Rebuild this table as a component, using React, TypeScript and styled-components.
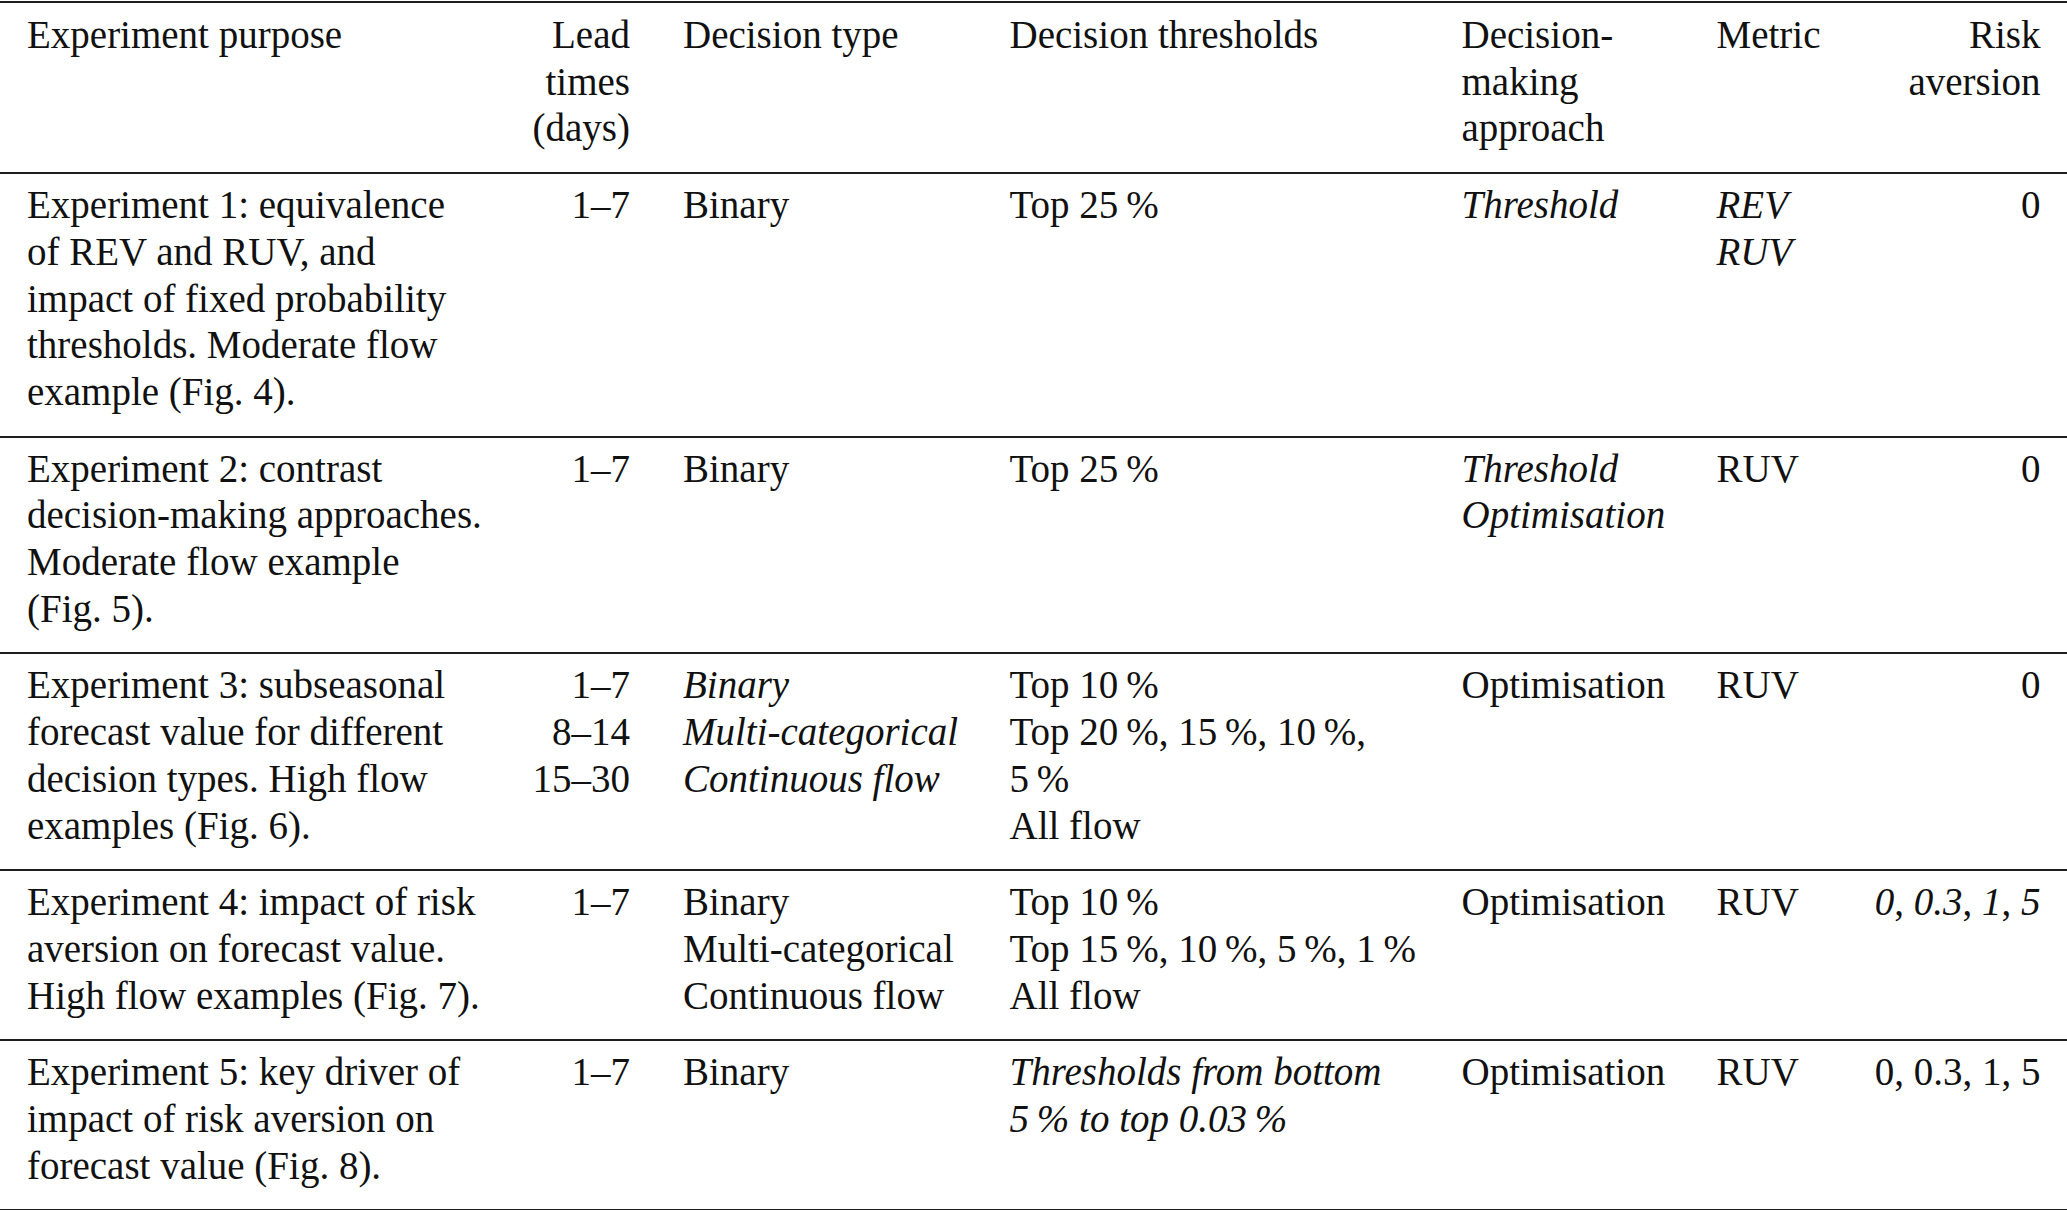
import React from 'react'
import styled, { createGlobalStyle } from 'styled-components';

type Line = React.ReactNode;

type Row = {
  purpose: Line[];
  lead: Line[];
  type: Line[];
  typeItalic?: boolean;
  thresholds: Line[];
  thresholdsItalic?: boolean;
  approach: Line[];
  approachItalic?: boolean;
  metric: Line[];
  metricItalic?: boolean;
  risk: Line[];
};

const pct = (n: string) => `${n}\u2009%`;

const RiskItalic = () => (
  <>
    <em>0</em>, <em>0.3</em>, <em>1</em>, <em>5</em>
  </>
);

const rows: Row[] = [
  {
    purpose: [
      'Experiment 1: equivalence',
      'of REV and RUV, and',
      'impact of fixed probability',
      'thresholds. Moderate flow',
      'example (Fig. 4).',
    ],
    lead: ['1–7'],
    type: ['Binary'],
    thresholds: [`Top ${pct('25')}`],
    approach: ['Threshold'],
    approachItalic: true,
    metric: ['REV', 'RUV'],
    metricItalic: true,
    risk: ['0'],
  },
  {
    purpose: [
      'Experiment 2: contrast',
      'decision-making approaches.',
      'Moderate flow example',
      '(Fig. 5).',
    ],
    lead: ['1–7'],
    type: ['Binary'],
    thresholds: [`Top ${pct('25')}`],
    approach: ['Threshold', 'Optimisation'],
    approachItalic: true,
    metric: ['RUV'],
    risk: ['0'],
  },
  {
    purpose: [
      'Experiment 3: subseasonal',
      'forecast value for different',
      'decision types. High flow',
      'examples (Fig. 6).',
    ],
    lead: ['1–7', '8–14', '15–30'],
    type: ['Binary', 'Multi-categorical', 'Continuous flow'],
    typeItalic: true,
    thresholds: [
      `Top ${pct('10')}`,
      `Top ${pct('20')}, ${pct('15')}, ${pct('10')},`,
      pct('5'),
      'All flow',
    ],
    approach: ['Optimisation'],
    metric: ['RUV'],
    risk: ['0'],
  },
  {
    purpose: [
      'Experiment 4: impact of risk',
      'aversion on forecast value.',
      'High flow examples (Fig. 7).',
    ],
    lead: ['1–7'],
    type: ['Binary', 'Multi-categorical', 'Continuous flow'],
    thresholds: [
      `Top ${pct('10')}`,
      `Top ${pct('15')}, ${pct('10')}, ${pct('5')}, ${pct('1')}`,
      'All flow',
    ],
    approach: ['Optimisation'],
    metric: ['RUV'],
    risk: [<RiskItalic key="r" />],
  },
  {
    purpose: [
      'Experiment 5: key driver of',
      'impact of risk aversion on',
      'forecast value (Fig. 8).',
    ],
    lead: ['1–7'],
    type: ['Binary'],
    thresholds: ['Thresholds from bottom', `${pct('5')} to top ${pct('0.03')}`],
    thresholdsItalic: true,
    approach: ['Optimisation'],
    metric: ['RUV'],
    risk: ['0, 0.3, 1, 5'],
  },
];

const Lines = ({ items }: { items: Line[] }) => (
  <>
    {items.map((l, i) => (
      <TextLine key={i}>{l}</TextLine>
    ))}
  </>
);

export default function App() {
  return (
    <>
      <GlobalStyle />
      <Page>
        <Table>
          <colgroup>
            <col style={{ width: 506 }} />
            <col style={{ width: 150.5 }} />
            <col style={{ width: 326.5 }} />
            <col style={{ width: 452 }} />
            <col style={{ width: 255 }} />
            <col style={{ width: 155 }} />
            <col style={{ width: 222 }} />
          </colgroup>
          <thead>
            <tr>
              <HeadCell><Lines items={['Experiment purpose']} /></HeadCell>
              <HeadCell $right><Lines items={['Lead', 'times', '(days)']} /></HeadCell>
              <HeadCell><Lines items={['Decision type']} /></HeadCell>
              <HeadCell><Lines items={['Decision thresholds']} /></HeadCell>
              <HeadCell><Lines items={['Decision-', 'making', 'approach']} /></HeadCell>
              <HeadCell><Lines items={['Metric']} /></HeadCell>
              <HeadCell $right><Lines items={['Risk', 'aversion']} /></HeadCell>
            </tr>
          </thead>
          <tbody>
            {rows.map((r, i) => (
              <tr key={i}>
                <Cell><Lines items={r.purpose} /></Cell>
                <Cell $right><Lines items={r.lead} /></Cell>
                <Cell $italic={r.typeItalic}><Lines items={r.type} /></Cell>
                <Cell $italic={r.thresholdsItalic}><Lines items={r.thresholds} /></Cell>
                <Cell $italic={r.approachItalic}><Lines items={r.approach} /></Cell>
                <Cell $italic={r.metricItalic}><Lines items={r.metric} /></Cell>
                <Cell $right><Lines items={r.risk} /></Cell>
              </tr>
            ))}
          </tbody>
        </Table>
      </Page>
    </>
  );
}

const GlobalStyle = createGlobalStyle`
  html, body {
    margin: 0;
    padding: 0;
    background: #ffffff;
  }
  body {
    font-family: "Liberation Serif", "Times New Roman", serif;
    color: #111;
  }
`

const Page = styled.div`
  width: 2067px;
  padding-top: 1px;
`

const Table = styled.table`
  width: 2067px;
  table-layout: fixed;
  border-collapse: separate;
  border-spacing: 0;
  font-size: 39px;
  line-height: 46.7px;
`

const Cell = styled.td<{ $right?: boolean; $italic?: boolean }>`
  vertical-align: top;
  padding: 8px 26.5px 20px;
  text-align: ${(p) => (p.$right ? 'right' : 'left')};
  font-style: ${(p) => (p.$italic ? 'italic' : 'normal')};
  border-bottom: 2px solid #1e1e1e;
  white-space: nowrap;

  &:first-child {
    padding-left: 27px;
  }

  em {
    font-style: italic;
  }
`

const HeadCell = styled(Cell).attrs({ as: 'th' })`
  font-weight: normal;
  padding-top: 9px;
  border-top: 2px solid #1e1e1e;
`

const TextLine = styled.div`
  display: block;
`
